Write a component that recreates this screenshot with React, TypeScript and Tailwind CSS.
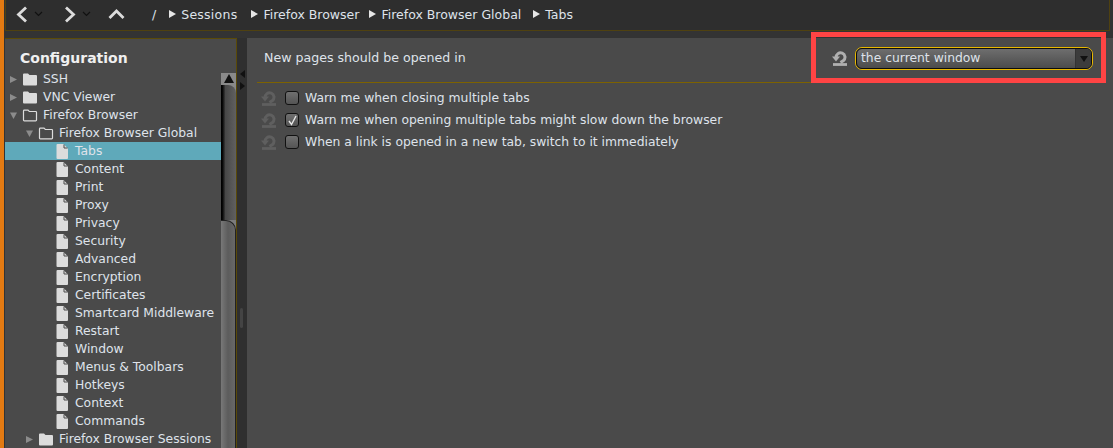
const font = "font-['DejaVu_Sans',sans-serif]";

type TreeRow = {
  label: string;
  indent: number;
  arrow?: "right" | "down";
  icon: "folder" | "open" | "file";
  selected?: boolean;
};

const rows: TreeRow[] = [
  { label: "SSH", indent: 0, arrow: "right", icon: "folder" },
  { label: "VNC Viewer", indent: 0, arrow: "right", icon: "folder" },
  { label: "Firefox Browser", indent: 0, arrow: "down", icon: "open" },
  { label: "Firefox Browser Global", indent: 16, arrow: "down", icon: "open" },
  { label: "Tabs", indent: 32, icon: "file", selected: true },
  { label: "Content", indent: 32, icon: "file" },
  { label: "Print", indent: 32, icon: "file" },
  { label: "Proxy", indent: 32, icon: "file" },
  { label: "Privacy", indent: 32, icon: "file" },
  { label: "Security", indent: 32, icon: "file" },
  { label: "Advanced", indent: 32, icon: "file" },
  { label: "Encryption", indent: 32, icon: "file" },
  { label: "Certificates", indent: 32, icon: "file" },
  { label: "Smartcard Middleware", indent: 32, icon: "file" },
  { label: "Restart", indent: 32, icon: "file" },
  { label: "Window", indent: 32, icon: "file" },
  { label: "Menus & Toolbars", indent: 32, icon: "file" },
  { label: "Hotkeys", indent: 32, icon: "file" },
  { label: "Context", indent: 32, icon: "file" },
  { label: "Commands", indent: 32, icon: "file" },
  { label: "Firefox Browser Sessions", indent: 16, arrow: "right", icon: "folder" },
];

function Arrow({ dir }: { dir?: "right" | "down" }) {
  return (
    <svg width="9" height="9" viewBox="0 0 9 9" className="shrink-0">
      {dir === "right" ? <path d="M1 1 L8 4.5 L1 8 Z" fill="#8c8c8c" /> : null}
      {dir === "down" ? <path d="M1 1.5 L8 1.5 L4.5 8 Z" fill="#8c8c8c" /> : null}
    </svg>
  );
}

function RowIcon({ icon }: { icon: TreeRow["icon"] }) {
  if (icon === "folder") {
    return (
      <svg width="16" height="13" viewBox="0 0 16 13" className="shrink-0">
        <path d="M1 1.5 Q1 .5 2 .5 H6 L7.5 2 H14 Q15 2 15 3 V11.5 Q15 12.5 14 12.5 H2 Q1 12.5 1 11.5 Z" fill="#dcdcdc" />
      </svg>
    );
  }
  if (icon === "open") {
    return (
      <svg width="16" height="13" viewBox="0 0 16 13" className="shrink-0">
        <path d="M1.5 11 V2 Q1.5 1.2 2.3 1.2 H6 L7.3 2.5 H13.7 Q14.5 2.5 14.5 3.3 V11 Q14.5 11.8 13.7 11.8 H2.3 Q1.5 11.8 1.5 11 Z" fill="none" stroke="#dcdcdc" strokeWidth="1.2" />
      </svg>
    );
  }
  return (
    <svg width="12" height="15" viewBox="0 0 12 15" className="shrink-0">
      <path d="M0.5 1 Q0.5 0 1.5 0 H7.5 L12 4.5 V14 Q12 15 11 15 H1.5 Q0.5 15 0.5 14 Z" fill="#dcdcdc" />
      <path d="M8 0.5 V4 H11.5" fill="none" stroke="#4a4a4a" strokeWidth="1" />
    </svg>
  );
}

function ResetIcon({ dim }: { dim?: boolean }) {
  const color = dim ? "#5f5f5f" : "#b0b0b0";
  return (
    <svg width="16" height="15" viewBox="0 0 16 15" className="shrink-0">
      <path d="M4.2 6.5 A4.4 4.4 0 1 1 11.5 9.5 L8.5 11.5" fill="none" stroke={color} strokeWidth="3" />
      <path d="M0 5.5 H8 L4 10.5 Z" fill={color} />
      <path d="M1 13.5 H15" stroke={color} strokeWidth="2.8" />
    </svg>
  );
}

function Crumb({ label, className = "" }: { label: string; className?: string }) {
  return (
    <span className={`flex items-center gap-[5px] ${className}`}>
      <svg width="7" height="8" viewBox="0 0 7 8" className="mb-[3px]">
        <path d="M0 0 L7 4 L0 8 Z" fill="#e6e6e6" />
      </svg>
      <span>{label}</span>
    </span>
  );
}

function OptionRow({ label, checked }: { label: string; checked?: boolean }) {
  return (
    <div className="flex h-[22px] items-center">
      <ResetIcon dim />
      <span className="ml-[8px] flex h-[14px] w-[14px] items-center justify-center rounded-[3px] border border-[#111] bg-gradient-to-b from-[#707070] to-[#545454]">
        {checked ? (
          <svg width="11" height="11" viewBox="0 0 11 11">
            <path d="M2 6 L4.5 9.5 L9 1" fill="none" stroke="#e8e8e8" strokeWidth="1.4" />
          </svg>
        ) : null}
      </span>
      <span className="ml-[6px]">{label}</span>
    </div>
  );
}

export default function App() {
  return (
    <div className={`flex h-[448px] w-[1113px] overflow-hidden bg-[#333333] text-[12.35px] text-[#dfe3ea] ${font}`}>
      <div className="w-[4px] shrink-0 bg-[#e37a12]" />
      <div className="flex min-w-0 flex-1 flex-col pl-[1px]">
        <header className="mr-[3px] flex h-[31px] shrink-0 items-center border-b border-l border-r border-[#4f4110] bg-[#2e2e2e] text-[12.5px]">
          <div className="mb-[2px] ml-[9px] flex items-center">
            <svg width="14" height="17" viewBox="0 0 14 17">
              <path d="M11 1.5 L3.5 8.5 L11 15.5" fill="none" stroke="#dcdcdc" strokeWidth="2.8" />
            </svg>
            <svg width="9" height="6" viewBox="0 0 9 6" className="ml-[5px]">
              <path d="M1 1 L4.5 4.5 L8 1" fill="none" stroke="#111" strokeWidth="1.2" />
            </svg>
          </div>
          <div className="mb-[2px] ml-[20px] flex items-center">
            <svg width="14" height="17" viewBox="0 0 14 17">
              <path d="M3 1.5 L10.5 8.5 L3 15.5" fill="none" stroke="#dcdcdc" strokeWidth="2.8" />
            </svg>
            <svg width="9" height="6" viewBox="0 0 9 6" className="ml-[5px]">
              <path d="M1 1 L4.5 4.5 L8 1" fill="none" stroke="#111" strokeWidth="1.2" />
            </svg>
          </div>
          <svg width="17" height="12" viewBox="0 0 17 12" className="mb-[2px] ml-[17px]">
            <path d="M1.5 10 L8.5 3 L15.5 10" fill="none" stroke="#dcdcdc" strokeWidth="2.8" />
          </svg>
          <span className="ml-[27px] mr-[13px]">/</span>
          <div className="flex items-center gap-[10px]">
            <Crumb label="Sessions" className="mr-[4px] tracking-[0.25px]" />
            <Crumb label="Firefox Browser" />
            <Crumb label="Firefox Browser Global" className="mr-[2px]" />
            <Crumb label="Tabs" />
          </div>
        </header>

        <div className="flex min-h-0 flex-1 pt-[7px]">
          <aside className="flex w-[232px] shrink-0 flex-col border-r border-t border-[#5a4a08] bg-[#4a4a4a]">
            <div className="flex h-[31px] shrink-0 items-end pb-[1px] pl-[15px] text-[14px] font-bold text-[#f0f0f0]">Configuration</div>
            <div className="flex min-h-0 flex-1">
              <div className="min-w-0 flex-1">
                {rows.map((row) => (
                  <div
                    key={row.label}
                    className={`flex h-[18px] items-center ${row.selected ? "bg-[#5fa9ba]" : ""}`}
                    style={{ paddingLeft: row.indent + 4 }}
                  >
                    <Arrow dir={row.arrow} />
                    <span className="ml-[4px] flex w-[16px] justify-center">
                      <RowIcon icon={row.icon} />
                    </span>
                    <span className="ml-[5px] whitespace-nowrap">{row.label}</span>
                  </div>
                ))}
              </div>
              <div className="mt-[3px] flex w-[15px] shrink-0 flex-col bg-gradient-to-b from-[#8a8a8a] to-[#666666]">
                <div className="flex h-[12px] items-start justify-center pt-[1px]">
                  <svg width="10" height="9" viewBox="0 0 10 9">
                    <path d="M5 0 L10 9 L0 9 Z" fill="#111" />
                  </svg>
                </div>
                <div className="h-[135px] rounded-tr-[8px] bg-gradient-to-r from-[#000000] via-[#484848] via-30% to-[#606060]" />
                <div className="flex-1 rounded-tr-[10px] border-r border-t border-[#222] bg-gradient-to-r from-[#787878] via-[#5c5c5c] to-[#686868]" />
              </div>
            </div>
          </aside>

          <div className="relative w-[10px] shrink-0 bg-[#2f2f2f]">
            <svg width="5" height="8" viewBox="0 0 5 8" className="absolute left-[3px] top-[32px]">
              <path d="M5 0 L0 4 L5 8 Z" fill="#111" />
            </svg>
            <svg width="5" height="8" viewBox="0 0 5 8" className="absolute left-[3px] top-[44px]">
              <path d="M0 0 L5 4 L0 8 Z" fill="#111" />
            </svg>
            <div className="absolute left-[3px] top-[270px] h-[20px] w-[3px] rounded-full bg-[#444]" />
          </div>

          <main className="min-w-0 flex-1 bg-[#4a4a4a]">
            <div className="mx-[10px] flex h-[45px] items-center justify-between border-b border-[#7d6200] pb-[3px] pl-[7px] pr-[10px]">
              <span className="text-[12.6px]">New pages should be opened in</span>
              <div className="flex items-center gap-[7px]">
                <ResetIcon />
                <div className="h-[23px] w-[238px] rounded-[7px] border border-[#e8b800]">
                  <div className="flex h-full items-center justify-between overflow-hidden rounded-[6px] border border-[#0c0c0c] bg-gradient-to-b from-[#6e6e6e] to-[#4c4c4c] pl-[4px]">
                    <span>the current window</span>
                    <span className="flex h-full w-[16px] items-center justify-center border-l border-[#333] bg-[#3c3c3c]">
                      <svg width="8" height="6" viewBox="0 0 8 6">
                        <path d="M0 0 H8 L4 6 Z" fill="#111" />
                      </svg>
                    </span>
                  </div>
                </div>
              </div>
            </div>
            <div className="pl-[14px] pt-[4px]">
              <OptionRow label="Warn me when closing multiple tabs" />
              <OptionRow label="Warn me when opening multiple tabs might slow down the browser" checked />
              <OptionRow label="When a link is opened in a new tab, switch to it immediately" />
            </div>
          </main>
        </div>
      </div>
      <div className="absolute left-[811px] top-[32px] h-[51px] w-[295px] border-[5px] border-[#ff4444]" />
    </div>
  );
}
